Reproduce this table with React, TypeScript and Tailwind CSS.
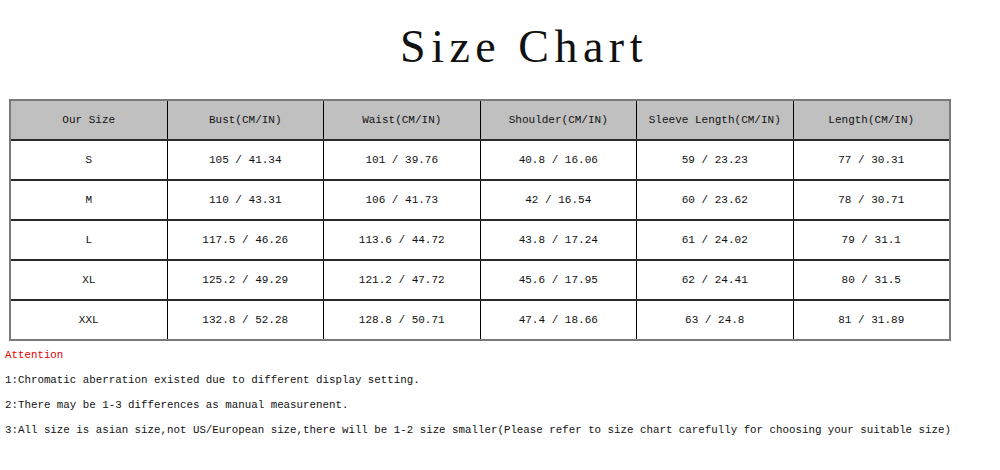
const headers = ['Our Size', 'Bust(CM/IN)', 'Waist(CM/IN)', 'Shoulder(CM/IN)', 'Sleeve Length(CM/IN)', 'Length(CM/IN)'];

const rows = [
  ['S', '105 / 41.34', '101 / 39.76', '40.8 / 16.06', '59 / 23.23', '77 / 30.31'],
  ['M', '110 / 43.31', '106 / 41.73', '42 / 16.54', '60 / 23.62', '78 / 30.71'],
  ['L', '117.5 / 46.26', '113.6 / 44.72', '43.8 / 17.24', '61 / 24.02', '79 / 31.1'],
  ['XL', '125.2 / 49.29', '121.2 / 47.72', '45.6 / 17.95', '62 / 24.41', '80 / 31.5'],
  ['XXL', '132.8 / 52.28', '128.8 / 50.71', '47.4 / 18.66', '63 / 24.8', '81 / 31.89'],
];

const notes = [
  '1:Chromatic aberration existed due to different display setting.',
  '2:There may be 1-3 differences as manual measurenent.',
  '3:All size is asian size,not US/European size,there will be 1-2 size smaller(Please refer to size chart carefully for choosing your suitable size)',
];

function Row({ cells, head }: { cells: string[]; head?: boolean }) {
  return (
    <div className={`flex ${head ? 'h-[38px] bg-[#c0c0c0]' : 'h-[40px] bg-white border-t-2 border-[#2a2a2a]'}`}>
      {cells.map((c, i) => (
        <div
          key={i}
          className={`flex-1 flex items-center justify-center pt-px text-[11px] text-[#111] ${i > 0 ? 'border-l border-black' : ''}`}
        >
          {c}
        </div>
      ))}
    </div>
  );
}

export default function App() {
  return (
    <div className="w-[1000px] h-[470px] bg-white font-['Liberation_Mono',monospace] overflow-hidden">
      <h1 className="h-[99px] pt-[17px] pl-[48px] text-center text-[46px] leading-[60px] tracking-[5.5px] text-[#111] font-['Liberation_Serif',serif]">
        Size Chart
      </h1>
      <div className="ml-[9px] w-[942px] border-2 border-[#7a7a7a]">
        <Row cells={headers} head />
        {rows.map((r) => (
          <Row key={r[0]} cells={r} />
        ))}
      </div>
      <div className="pl-[5px] text-[10.8px] leading-[25px] text-[#111] pt-[2px]">
        <p className="text-[#e00000]">Attention</p>
        {notes.map((n) => (
          <p key={n}>{n}</p>
        ))}
      </div>
    </div>
  );
}
